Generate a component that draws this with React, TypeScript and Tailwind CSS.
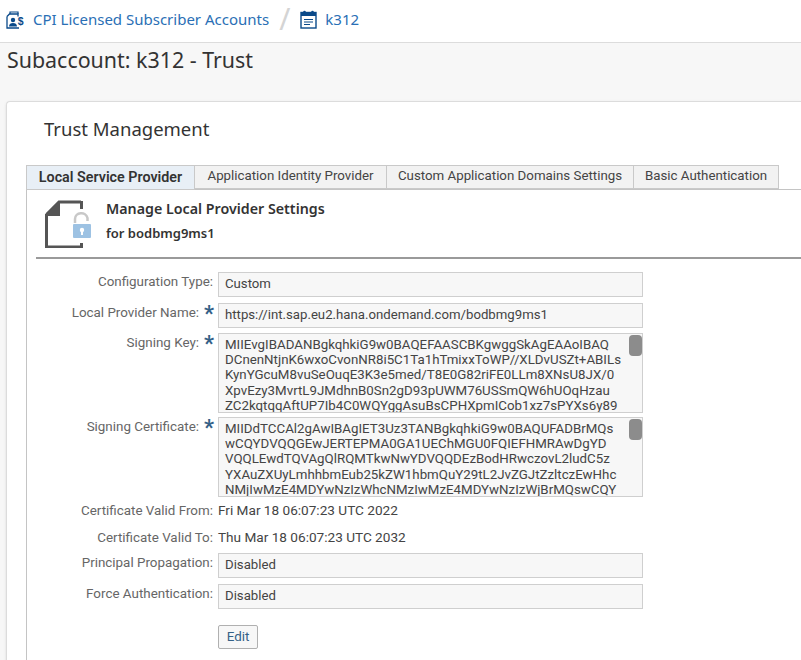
const FONT = "font-['Noto_Sans',sans-serif]";
const BODY = "font-['Roboto',sans-serif]";

const signingKey = [
  "MIIEvgIBADANBgkqhkiG9w0BAQEFAASCBKgwggSkAgEAAoIBAQ",
  "DCnenNtjnK6wxoCvonNR8i5C1Ta1hTmixxToWP//XLDvUSZt+ABILs",
  "KynYGcuM8vuSeOuqE3K3e5med/T8E0G82riFE0LLm8XNsU8JX/0",
  "XpvEzy3MvrtL9JMdhnB0Sn2gD93pUWM76USSmQW6hUOqHzau",
  "ZC2kqtqqAftUP7Ib4C0WQYggAsuBsCPHXpmICob1xz7sPYXs6y89",
];

const signingCert = [
  "MIIDdTCCAl2gAwIBAgIET3Uz3TANBgkqhkiG9w0BAQUFADBrMQs",
  "wCQYDVQQGEwJERTEPMA0GA1UEChMGU0FQIEFHMRAwDgYD",
  "VQQLEwdTQVAgQlRQMTkwNwYDVQQDEzBodHRwczovL2ludC5z",
  "YXAuZXUyLmhhbmEub25kZW1hbmQuY29tL2JvZGJtZzltczEwHhc",
  "NMjIwMzE4MDYwNzIzWhcNMzIwMzE4MDYwNzIzWjBrMQswCQY",
];

function AccountsIcon() {
  return (
    <svg width="18" height="18" viewBox="0 0 18 18" fill="none" className="shrink-0">
      <path d="M4 3V1h8v2" stroke="#0a4a8a" strokeWidth="1.2" />
      <path d="M1 5.500 3.500 3H12v2.500M1 5.500V17h12" stroke="#0a4a8a" strokeWidth="1.300" />
      <circle cx="7" cy="9" r="2.200" fill="#0a4a8a" />
      <path d="M3 15.500c0-2.500 1.800-3.500 4-3.500s4 1 4 3.500z" fill="#0a4a8a" />
      <text x="11.800" y="14" fontSize="10.500" fontWeight="700" fill="#0a4a8a" fontFamily="Liberation Sans, sans-serif">
        $
      </text>
    </svg>
  );
}

function SubaccountIcon() {
  return (
    <svg width="17" height="19" viewBox="0 0 17 19" fill="none" className="shrink-0">
      <rect x="1" y="2.500" width="15" height="15.500" stroke="#0a4a8a" strokeWidth="1.400" />
      <rect x="1" y="2" width="15" height="4" fill="#0a4a8a" />
      <circle cx="4.500" cy="2" r="1.300" fill="#0a4a8a" />
      <circle cx="12.500" cy="2" r="1.300" fill="#0a4a8a" />
      <path d="M4 9.500h9M4 12h9M4 14.500h6" stroke="#0a4a8a" strokeWidth="1.100" />
    </svg>
  );
}

function ProviderIcon() {
  return (
    <svg width="48" height="48" viewBox="0 0 48 48" fill="none" className="shrink-0">
      <path d="M1.500 14.500 14 2h22" stroke="#555" strokeWidth="3" />
      <path d="M0 15 15 0v15z" transform="translate(0 1)" fill="#555" />
      <path d="M36.500 1v8M1.500 14v33h35v-4" stroke="#555" strokeWidth="3" />
      <path d="M30 23v-4c0-7 11-8 12.500-1v3" stroke="#c8c8c8" strokeWidth="2.500" fill="none" />
      <rect x="28" y="24" width="18" height="14" rx="1" fill="#9dc2e3" />
      <circle cx="37" cy="30" r="2.200" fill="#fff" />
      <rect x="36" y="30" width="2" height="5" fill="#fff" />
    </svg>
  );
}

function Tab({ label, active, className }: { label: string; active?: boolean; className: string }) {
  return (
    <div
      className={`flex shrink-0 justify-center leading-[20px] whitespace-nowrap ${BODY} ${className} ${
        active
          ? "relative z-10 -mb-px -ml-px h-[25px] border border-[#c9c9c9] bg-[#e8eff6] pt-[1px] text-[14.300px] font-semibold text-[#333]"
          : "-ml-px h-[24px] border border-[#c9c9c9] bg-[#f2f2f2] text-[13.300px] text-[#444]"
      }`}
    >
      {label}
    </div>
  );
}

function Row({
  label,
  required,
  className,
  children,
}: {
  label: string;
  required?: boolean;
  className?: string;
  children: React.ReactNode;
}) {
  return (
    <div className={`flex ${className ?? ""}`}>
      <div className="flex w-[191px] shrink-0 justify-end pr-[5px] text-[13.400px] leading-[20px] whitespace-nowrap text-[#666]">
        <span>{label}</span>
        {required ? (
          <span className="ml-[5px] w-[9px] text-[22px] leading-[22px] font-bold text-[#346187]">*</span>
        ) : null}
      </div>
      {children}
    </div>
  );
}

function Field({ value }: { value: string }) {
  return (
    <div className="h-[25px] w-[425px] border border-[#cfcfcf] bg-[#f7f7f7] px-[6px] text-[13.200px] leading-[21px] text-[#444]">
      {value}
    </div>
  );
}

function CodeBox({ lines }: { lines: string[] }) {
  return (
    <div className="relative h-[80px] w-[425px] overflow-hidden border border-[#cfcfcf] bg-[#f7f7f7] pt-[3px] pl-[6px] text-[13.300px] leading-[15.200px] whitespace-pre text-[#444]">
      {lines.map((line) => (
        <div key={line}>{line}</div>
      ))}
      <div className="absolute top-[1px] right-0 h-[21px] w-[13px] rounded-[4px] bg-[#8c8c8c]" />
    </div>
  );
}

export default function App() {
  return (
    <div className={`h-[660px] w-[801px] overflow-hidden bg-[#f7f7f7] ${FONT}`}>
      <div className="flex h-[43px] items-center border-b border-[#dcdcdc] bg-white pb-[3px] pl-[6px]">
        <AccountsIcon />
        <span className="ml-[9px] text-[15px] text-[#2a6fb5]">CPI Licensed Subscriber Accounts</span>
        <span className="mx-[10px] mb-[2px] text-[30px] leading-[38px] text-[#d4d4d4]">/</span>
        <SubaccountIcon />
        <span className="ml-[8px] text-[15px] text-[#2a6fb5]">k312</span>
      </div>
      <h1 className="mt-[3px] ml-[7px] text-[21.400px] leading-[28px] text-[#333]">Subaccount: k312 - Trust</h1>
      <div className="mt-[27px] ml-[6px] h-[600px] rounded-l-[4px] border border-r-0 border-[#dcdcdc] bg-white pt-[13px] pl-[19px] shadow-sm">
        <h2 className="ml-[18px] text-[18.500px] leading-[28px] text-[#333]">Trust Management</h2>
        <div className="mt-[22px] h-[500px] border-l border-[#c4c4c4]">
          <div className="flex items-end border-b border-[#c4c4c4]">
            <Tab label="Local Service Provider" active className="w-[169px]" />
            <Tab label="Application Identity Provider" className="w-[193px]" />
            <Tab label="Custom Application Domains Settings" className="w-[248px]" />
            <Tab label="Basic Authentication" className="w-[146px]" />
          </div>
          <div className="ml-[9px] flex h-[69px] items-center gap-[13px] border-b-2 border-[#9a9a9a] pl-[9px]">
            <ProviderIcon />
            <div className="pb-[6px] text-[14.250px] leading-[25px] font-semibold text-[#333]">
              <div>Manage Local Provider Settings</div>
              <div className="text-[13px]">for bodbmg9ms1</div>
            </div>
          </div>
          <div className={`flex flex-col pt-[13px] ${BODY}`}>
            <Row label="Configuration Type:" className="mb-[6px]">
              <Field value="Custom" />
            </Row>
            <Row label="Local Provider Name:" required className="mb-[5px]">
              <Field value="https://int.sap.eu2.hana.ondemand.com/bodbmg9ms1" />
            </Row>
            <Row label="Signing Key:" required className="mb-[4px]">
              <CodeBox lines={signingKey} />
            </Row>
            <Row label="Signing Certificate:" required className="mb-[4px]">
              <CodeBox lines={signingCert} />
            </Row>
            <Row label="Certificate Valid From:" className="mb-[7px]">
              <span className="-mt-px text-[13.600px] leading-[20px] text-[#444]">Fri Mar 18 06:07:23 UTC 2022</span>
            </Row>
            <Row label="Certificate Valid To:" className="mb-[5px]">
              <span className="-mt-px text-[13.600px] leading-[20px] text-[#444]">Thu Mar 18 06:07:23 UTC 2032</span>
            </Row>
            <Row label="Principal Propagation:" className="mb-[6px]">
              <Field value="Disabled" />
            </Row>
            <Row label="Force Authentication:">
              <Field value="Disabled" />
            </Row>
            <div className="mt-[15px] ml-[191px]">
              <button
                type="button"
                className="h-[24px] w-[40px] rounded-[2px] border border-[#b0b0b0] bg-[#f7f7f7] text-[13.400px] leading-[20px] text-[#346187]"
              >
                Edit
              </button>
            </div>
          </div>
        </div>
      </div>
    </div>
  );
}
